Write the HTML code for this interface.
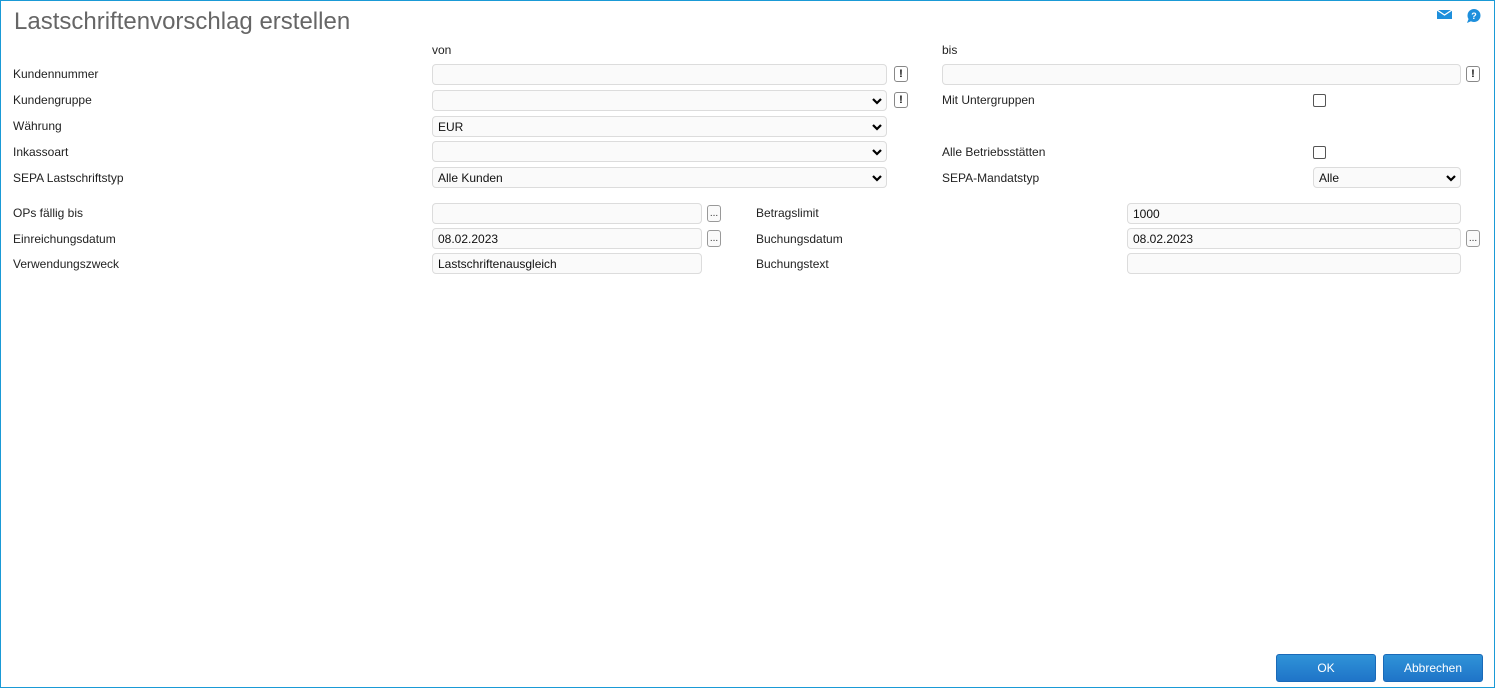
<!DOCTYPE html>
<html><head><meta charset="utf-8"><style>
*{box-sizing:border-box}
body{margin:0;width:1495px;height:688px;background:#fff;font-family:"Liberation Sans",Arial,sans-serif;font-size:12px;color:#222;position:relative;overflow:hidden}
.frame{position:absolute;left:0;top:0;width:1495px;height:688px;border:1px solid #1a9ad6}
.a{position:absolute}
.lbl{position:absolute;font-size:12px;line-height:14px;color:#222}
.in{position:absolute;height:21px;border:1px solid #dcdcdc;border-radius:4px;background:#fafafa;padding:0 5px;line-height:21px;font-size:12px;color:#111}
.sel{position:absolute;height:21px;border:1px solid #dcdcdc;border-radius:4px;background:#fafafa;padding:0 5px;line-height:21px;font-size:12px;color:#111}
.sel svg{position:absolute;right:4px;top:7px}
.btn{position:absolute;width:14px;height:16px;border:1px solid #888;border-radius:3px;background:#fff;font-size:11px;font-weight:bold;text-align:center;line-height:14px;color:#111}
.dots{position:absolute;width:14px;height:17px;border:1px solid #999;border-radius:3px;background:#fafafa;font-size:10px;text-align:center;line-height:16px;color:#333}
.cb{position:absolute;width:13px;height:13px;border:1px solid #555;border-radius:2px;background:#fff}
.pb{position:absolute;top:654px;width:100px;height:28px;border-radius:3px;background:linear-gradient(#2f93d8,#1f74c8);color:#fff;font-size:12px;text-align:center;line-height:27px;border:1px solid #1a6ab8}
</style></head><body>
<div class="frame"></div>
<div class="a" style="left:14px;top:8px;font-size:24px;color:#666;line-height:28px">Lastschriftenvorschlag erstellen</div>
<svg class="a" style="left:1437px;top:10px" width="15" height="9" viewBox="0 0 15 9"><rect width="15" height="9" fill="#1e8fdc"/><path d="M0 0 L7.5 5 L15 0" fill="none" stroke="#fff" stroke-width="1.3"/></svg>
<svg class="a" style="left:1466px;top:9px" width="15" height="14" viewBox="0 0 15 14"><circle cx="8" cy="6.5" r="6.5" fill="#1e8fdc"/><path d="M2.5 10 L1 14 L5.5 12 Z" fill="#1e8fdc"/><text x="8" y="10" font-size="9" font-weight="bold" fill="#fff" text-anchor="middle" font-family="Liberation Sans">?</text></svg>

<div class="lbl" style="left:432px;top:43px">von</div>
<div class="lbl" style="left:942px;top:43px">bis</div>

<div class="lbl" style="left:13px;top:67px">Kundennummer</div>
<div class="lbl" style="left:13px;top:93px">Kundengruppe</div>
<div class="lbl" style="left:13px;top:119px">Währung</div>
<div class="lbl" style="left:13px;top:145px">Inkassoart</div>
<div class="lbl" style="left:13px;top:171px">SEPA Lastschriftstyp</div>
<div class="lbl" style="left:13px;top:206px">OPs fällig bis</div>
<div class="lbl" style="left:13px;top:232px">Einreichungsdatum</div>
<div class="lbl" style="left:13px;top:257px">Verwendungszweck</div>

<div class="in" style="left:432px;top:64px;width:455px"></div>
<div class="btn" style="left:894px;top:66px">!</div>
<div class="in" style="left:942px;top:64px;width:519px"></div>
<div class="btn" style="left:1466px;top:66px">!</div>

<div class="sel" style="left:432px;top:90px;width:455px"><svg width="10" height="7" viewBox="0 0 10 7"><path d="M1 1 L5 5 L9 1" fill="none" stroke="#000" stroke-width="2.2"/></svg></div>
<div class="btn" style="left:894px;top:92px">!</div>
<div class="lbl" style="left:942px;top:93px">Mit Untergruppen</div>
<div class="cb" style="left:1313px;top:94px"></div>

<div class="sel" style="left:432px;top:116px;width:455px">EUR<svg width="10" height="7" viewBox="0 0 10 7"><path d="M1 1 L5 5 L9 1" fill="none" stroke="#000" stroke-width="2.2"/></svg></div>

<div class="sel" style="left:432px;top:141px;width:455px"><svg width="10" height="7" viewBox="0 0 10 7"><path d="M1 1 L5 5 L9 1" fill="none" stroke="#000" stroke-width="2.2"/></svg></div>
<div class="lbl" style="left:942px;top:145px">Alle Betriebsstätten</div>
<div class="cb" style="left:1313px;top:146px"></div>

<div class="sel" style="left:432px;top:167px;width:455px">Alle Kunden<svg width="10" height="7" viewBox="0 0 10 7"><path d="M1 1 L5 5 L9 1" fill="none" stroke="#000" stroke-width="2.2"/></svg></div>
<div class="lbl" style="left:942px;top:171px">SEPA-Mandatstyp</div>
<div class="sel" style="left:1313px;top:167px;width:148px">Alle<svg width="10" height="7" viewBox="0 0 10 7"><path d="M1 1 L5 5 L9 1" fill="none" stroke="#000" stroke-width="2.2"/></svg></div>

<div class="in" style="left:432px;top:203px;width:270px"></div>
<div class="dots" style="left:707px;top:205px">...</div>
<div class="lbl" style="left:756px;top:206px">Betragslimit</div>
<div class="in" style="left:1127px;top:203px;width:334px">1000</div>

<div class="in" style="left:432px;top:228px;width:270px">08.02.2023</div>
<div class="dots" style="left:707px;top:230px">...</div>
<div class="lbl" style="left:756px;top:232px">Buchungsdatum</div>
<div class="in" style="left:1127px;top:228px;width:334px">08.02.2023</div>
<div class="dots" style="left:1466px;top:230px">...</div>

<div class="in" style="left:432px;top:253px;width:270px">Lastschriftenausgleich</div>
<div class="lbl" style="left:756px;top:257px">Buchungstext</div>
<div class="in" style="left:1127px;top:253px;width:334px"></div>

<div class="pb" style="left:1276px">OK</div>
<div class="pb" style="left:1383px">Abbrechen</div>
</body></html>
